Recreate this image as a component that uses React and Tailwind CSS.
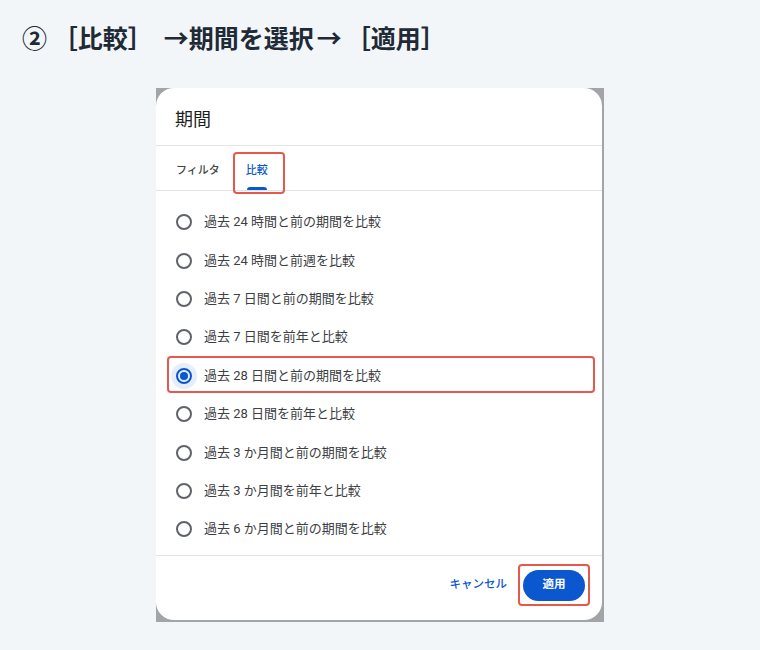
import React from "react";

const options = [
  "過去 24 時間と前の期間を比較",
  "過去 24 時間と前週を比較",
  "過去 7 日間と前の期間を比較",
  "過去 7 日間を前年と比較",
  "過去 28 日間と前の期間を比較",
  "過去 28 日間を前年と比較",
  "過去 3 か月間と前の期間を比較",
  "過去 3 か月間を前年と比較",
  "過去 6 か月間と前の期間を比較",
];

const SELECTED = 4;

function Radio({ checked }) {
  return (
    <span className="relative flex h-4 w-4 shrink-0 items-center justify-center">
      {checked ? <span className="absolute left-1/2 top-1/2 h-[26px] w-[26px] -translate-x-1/2 -translate-y-1/2 rounded-full bg-[#e6eefb]" /> : null}
      <span className={`relative flex h-4 w-4 items-center justify-center rounded-full border-2 ${checked ? "border-[#0b57d0]" : "border-[#5f6368]"}`}>
        {checked ? <span className="h-[8px] w-[8px] rounded-full bg-[#0b57d0]" /> : null}
      </span>
    </span>
  );
}

function Dialog() {
  return (
    <div className="relative h-[532px] w-[446px] overflow-hidden rounded-[18px] bg-white" style={{ fontFamily: 'Roboto, "Noto Sans CJK JP", sans-serif' }}>
      <div className="h-[58px] border-b border-[#e3e3e3] pl-[19px] pt-[20px] text-[18px] leading-[24px] text-[#1f1f1f]">期間</div>

      <div className="flex h-[45px] gap-[26px] border-b border-[#e3e3e3] pl-[20px]">
        <div className="flex flex-col pt-[17px]">
          <span className="text-[11px] font-medium leading-[16px] text-[#444746]">フィルタ</span>
          <span className="mt-[8px] h-[3px]" />
        </div>
        <div className="flex flex-col pt-[17px]">
          <span className="text-[11px] font-medium leading-[16px] text-[#0b57d0]">比較</span>
          <span className="mx-[1px] mt-[8px] h-[3px] rounded-t-[3px] bg-[#0b57d0]" />
        </div>
      </div>

      <div className="border-b border-[#e3e3e3] pb-[6px] pt-[12px]">
        {options.map((label, i) => (
          <div key={label} className="flex h-[38.4px] items-center gap-[12px] pl-[20px]">
            <Radio checked={i === SELECTED} />
            <span className="text-[13px] leading-[18px] text-[#3c4043]">{label}</span>
          </div>
        ))}
      </div>

      <div className="flex items-start justify-end gap-[16px] pr-[17px] pt-[14px]">
        <button type="button" className="h-[31px] text-[11.5px] font-medium text-[#0b57d0]">キャンセル</button>
        <button type="button" className="h-[31px] w-[62px] rounded-full bg-[#0b57d0] text-[11.5px] font-bold text-white">適用</button>
      </div>

      {/* annotation boxes */}
      <div className="absolute left-[77px] top-[64px] h-[42px] w-[52px] rounded-[4px] border-2 border-[#e5584c]" />
      <div className="absolute left-[11px] top-[268px] h-[37px] w-[428px] rounded-[4px] border-2 border-[#e5584c]" />
      <div className="absolute left-[362px] top-[476px] h-[42px] w-[72px] rounded-[4px] border-2 border-[#e5584c]" />
    </div>
  );
}

export default function App() {
  return (
    <div className="h-[650px] w-[760px] bg-[#f3f6f9]">
      <div className="pl-[22px] pt-[21px] text-[25px] font-bold leading-[32px] text-[#1e2a36]" style={{ fontFamily: '"Noto Sans CJK JP", sans-serif' }}>
        ② ［比較］<span className="ml-[11px]">→</span>期間を選択<span className="ml-[3px]">→</span><span className="ml-[4px]">［</span>適用］
      </div>
      <div className="ml-[156px] mt-[35px] h-[534px] w-[448px] bg-[#a2a4a8]">
        <Dialog />
      </div>
    </div>
  );
}
